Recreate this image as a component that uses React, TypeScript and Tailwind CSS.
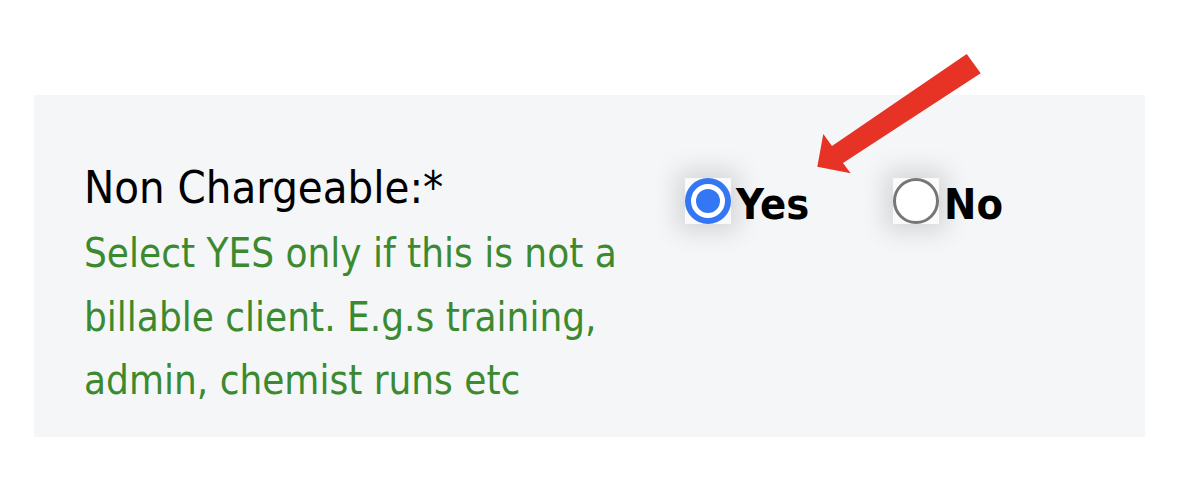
export default function App() {
  const font = { fontFamily: '"DejaVu Sans Condensed", "DejaVu Sans", "Liberation Sans", sans-serif' };

  return (
    <div className="relative w-[1192px] h-[482px] bg-white pt-[95px] pl-[34px]" style={font}>
      {/* form row */}
      <div className="flex w-[1111px] h-[342px] bg-[#f5f6f8] pl-[50px] pt-[67px]">
        {/* label + help */}
        <div className="w-[601px]">
          <div className="text-[45px] leading-[52px] text-black font-stretch-condensed">Non Chargeable:*</div>
          <p className="mt-[8px] w-[570px] text-[40px] leading-[63.5px] text-[#3c8a30] font-stretch-condensed">
            Select YES only if this is not a billable client. E.g.s training, admin, chemist runs etc
          </p>
        </div>

        {/* radios */}
        <div className="flex items-end h-[62px]">
          <label className="flex w-[208px] items-end gap-[5px]">
            <span className="flex h-[46px] w-[46px] items-center justify-center bg-[#fafafa] shadow-[0_0_24px_8px_rgba(0,0,0,0.13)]">
              <span className="flex h-[46px] w-[46px] items-center justify-center rounded-full border-[6px] border-[#3477f5] bg-white">
                <span className="h-[24px] w-[24px] rounded-full bg-[#3477f5]" />
              </span>
            </span>
            <span className="text-[43px] leading-[40px] font-bold text-black font-stretch-condensed">Yes</span>
          </label>
          <label className="flex items-end gap-[5px]">
            <span className="flex h-[46px] w-[46px] items-center justify-center bg-[#fafafa] shadow-[0_0_24px_8px_rgba(0,0,0,0.13)]">
              <span className="h-[46px] w-[46px] rounded-full border-[3px] border-[#767676] bg-white" />
            </span>
            <span className="text-[43px] leading-[40px] font-bold text-black font-stretch-condensed">No</span>
          </label>
        </div>
      </div>

      {/* annotation arrow */}
      <svg className="pointer-events-none absolute left-0 top-0" width="1192" height="482" viewBox="0 0 1192 482">
        <polygon
          points="966.7,54 980.7,73.3 843,163 850.7,173.3 817.3,166.7 823.3,134 832,146"
          fill="#e63326"
        />
      </svg>
    </div>
  );
}
